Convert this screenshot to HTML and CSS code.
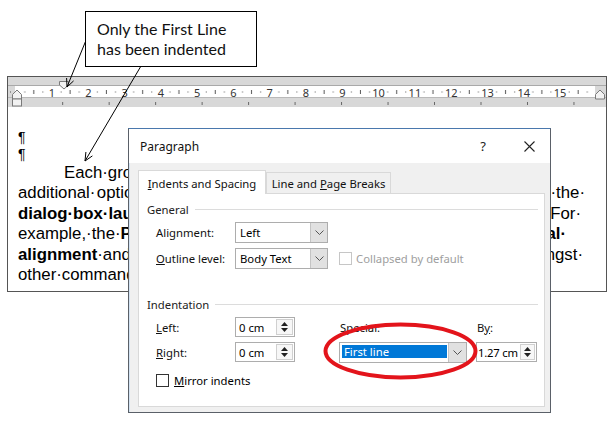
FILE: index.html
```html
<!DOCTYPE html>
<html>
<head>
<meta charset="utf-8">
<link rel="stylesheet" href="styles.css">
</head>
<body>
<div class="callout">Only the First Line<br>has been indented</div>

<div class="word">
  <svg class="ruler" viewBox="8 77 598 30" width="598" height="30">
    <defs>
      <pattern id="rq" patternUnits="userSpaceOnUse" x="15.7" y="77" width="36.29" height="30">
        <rect x="8.6" y="14.5" width="1" height="1" fill="#555"/>
        <rect x="17.6" y="13" width="1" height="4" fill="#555"/>
        <rect x="26.7" y="14.5" width="1" height="1" fill="#555"/>
      </pattern>
      <pattern id="rt" patternUnits="userSpaceOnUse" x="15.7" y="77" width="46.48" height="30">
        <rect x="0" y="25" width="1" height="3" fill="#666"/>
      </pattern>
    </defs>
    <rect x="8" y="77" width="598" height="30" fill="#d8d8d8"/>
    <rect x="15" y="85" width="580" height="13" fill="#fff"/>
    <line x1="8" y1="85.5" x2="606" y2="85.5" stroke="#a9a9a9"/>
    <line x1="8" y1="97.5" x2="606" y2="97.5" stroke="#b9b9b9"/>
    <rect x="10" y="91.5" width="1" height="1" fill="#555"/>
    <rect x="15.7" y="77" width="579" height="30" fill="url(#rq)"/>
    <rect x="55" y="77" width="540" height="30" fill="url(#rt)"/>
    <g class="rnum">
      <text x="52" y="96.5">1</text>
      <text x="88.3" y="96.5">2</text>
      <text x="124.6" y="96.5">3</text>
      <text x="160.9" y="96.5">4</text>
      <text x="197.2" y="96.5">5</text>
      <text x="233.4" y="96.5">6</text>
      <text x="269.7" y="96.5">7</text>
      <text x="306" y="96.5">8</text>
      <text x="342.3" y="96.5">9</text>
      <text x="378.6" y="96.5">10</text>
      <text x="414.9" y="96.5">11</text>
      <text x="451.2" y="96.5">12</text>
      <text x="487.5" y="96.5">13</text>
      <text x="523.8" y="96.5">14</text>
      <text x="560.1" y="96.5">15</text>
    </g>
    <path d="M59.5 81.5 H68.5 V85 L64 89 L59.5 85 Z" fill="#f2f2f2" stroke="#7a7a7a"/>
    <path d="M12.5 99 V94.5 L17 90 L21.5 94.5 V99 Z" fill="#f2f2f2" stroke="#7a7a7a"/>
    <rect x="12.5" y="99" width="9" height="7" fill="#f2f2f2" stroke="#7a7a7a"/>
    <path d="M595.5 99 V94.5 L600 90 L604.5 94.5 V99 Z" fill="#f2f2f2" stroke="#7a7a7a"/>
  </svg>
  <div class="doc">
    <div class="pil">¶</div>
    <div class="pil last">¶</div>
    <div class="line first"><span>Each·gro</span></div>
    <div class="line"><span>additional·&#8202;optio</span><span>·the·</span></div>
    <div class="line"><span><b>dialog·box·laun</b></span><span class="e3">For·</span></div>
    <div class="line"><span>example,·the·<b>Pa</b></span><span class="e19"><b>Vertical·</b></span></div>
    <div class="line"><span><b>alignment</b>·and</span><span class="e2">amongst·</span></div>
    <div class="line"><span>other·command</span></div>
  </div>
</div>

<div class="dialog">
  <div class="titlebar">
    <span class="title">Paragraph</span>
    <span class="help">?</span>
    <svg class="close" width="11" height="11" viewBox="0 0 11 11"><path d="M0.5 0.5 L10.5 10.5 M10.5 0.5 L0.5 10.5" stroke="#222" stroke-width="1.1" fill="none"/></svg>
  </div>
  <div class="dbody">
    <div class="tabs">
      <div class="tab active"><span><u>I</u>ndents and Spacing</span></div>
      <div class="tab"><span>Line and <u>P</u>age Breaks</span></div>
    </div>
    <div class="panel">
      <div class="legend"><span>General</span></div>
      <div class="grid general">
        <span class="lbl">Ali<u>g</u>nment:</span>
        <div class="select"><span class="val">Left</span><span class="dd"><svg width="9" height="5" viewBox="0 0 9 5"><path d="M0.5 0.5 L4.5 4.5 L8.5 0.5" stroke="#555" fill="none"/></svg></span></div>
        <span></span>
        <span></span>
        <span class="lbl"><u>O</u>utline level:</span>
        <div class="select"><span class="val">Body Text</span><span class="dd"><svg width="9" height="5" viewBox="0 0 9 5"><path d="M0.5 0.5 L4.5 4.5 L8.5 0.5" stroke="#555" fill="none"/></svg></span></div>
        <span></span>
        <div class="chk disabled"><span class="box"></span><span>Collapsed by default</span></div>
      </div>
      <div class="legend sec2"><span>Indentation</span></div>
      <div class="grid indent">
        <span class="lbl"><u>L</u>eft:</span>
        <div class="spin"><span class="val">0 cm</span><span class="arrows"><svg width="7" height="4" viewBox="0 0 7 4"><path d="M0 4 L3.5 0 L7 4 Z" fill="#222"/></svg><svg width="7" height="4" viewBox="0 0 7 4"><path d="M0 0 L3.5 4 L7 0 Z" fill="#222"/></svg></span></div>
        <span></span>
        <span class="lbl special"><u>S</u>pecial:</span>
        <span></span>
        <span class="lbl by">B<u>y</u>:</span>
        <span class="lbl"><u>R</u>ight:</span>
        <div class="spin"><span class="val">0 cm</span><span class="arrows"><svg width="7" height="4" viewBox="0 0 7 4"><path d="M0 4 L3.5 0 L7 4 Z" fill="#222"/></svg><svg width="7" height="4" viewBox="0 0 7 4"><path d="M0 0 L3.5 4 L7 0 Z" fill="#222"/></svg></span></div>
        <span></span>
        <div class="select sel-special"><span class="hl">First line</span><span class="dd"><svg width="9" height="5" viewBox="0 0 9 5"><path d="M0.5 0.5 L4.5 4.5 L8.5 0.5" stroke="#555" fill="none"/></svg></span></div>
        <span></span>
        <div class="spin by-spin"><span class="val">1.27 cm</span><span class="arrows"><svg width="7" height="4" viewBox="0 0 7 4"><path d="M0 4 L3.5 0 L7 4 Z" fill="#222"/></svg><svg width="7" height="4" viewBox="0 0 7 4"><path d="M0 0 L3.5 4 L7 0 Z" fill="#222"/></svg></span></div>
      </div>
      <div class="chk mirror"><span class="box"></span><span><u>M</u>irror indents</span></div>
    </div>
  </div>
</div>

<svg class="overlay" width="616" height="426" viewBox="0 0 616 426">
  <path d="M85.5 41.5 L67 87 M73.6 80.9 L67 87 L66.6 78" stroke="#000" stroke-width="1" fill="none"/>
  <path d="M141 66 L85 161 M92.4 155.9 L85 161 L85.9 152" stroke="#000" stroke-width="1" fill="none"/>
  <ellipse cx="400.5" cy="351" rx="75" ry="26.5" fill="none" stroke="#e3141b" stroke-width="4"/>
</svg>
</body>
</html>
```

FILE: styles.css
```css
* { box-sizing: border-box; }
html, body { margin: 0; padding: 0; }
body {
  width: 616px;
  height: 426px;
  overflow: hidden;
  position: relative;
  background: #fff;
  font-family: "Liberation Sans", Arial, sans-serif;
}

.callout {
  margin: 11px 0 0 85px;
  width: 172px;
  height: 56px;
  border: 1px solid #000;
  padding: 7px 0 0 11px;
  font-family: Lato, "Open Sans", sans-serif;
  font-size: 16px;
  line-height: 19.5px;
  color: #111;
}

.word {
  margin: 9px 0 0 7px;
  width: 600px;
  height: 216px;
  border: 1px solid #555;
  display: flex;
  flex-direction: column;
  background: #fff;
}
.ruler { display: block; flex: none; }
.rnum text {
  font-family: "Noto Sans", sans-serif;
  font-size: 11px;
  fill: #333;
  text-anchor: middle;
}

.doc {
  flex: 1;
  overflow: hidden;
  padding: 22px 21px 0 10px;
  color: #000;
}
.pil {
  font-size: 14px;
  line-height: 17.3px;
}
.pil.last { margin-bottom: -1px; }
.line {
  display: flex;
  justify-content: space-between;
  font-size: 16.8px;
  line-height: 20.5px;
  white-space: nowrap;
}
.line.first { padding-left: 46px; }
.e2 { margin-right: 2px; }
.e3 { margin-right: 4px; }
.e19 { margin-right: 19px; }

.dialog {
  position: absolute;
  left: 128px;
  top: 128px;
  width: 423px;
  height: 285px;
  border: 1px solid #5a6068;
  border-top-color: #4a78ad;
  background: #f0f0f0;
  box-shadow: inset 1px 1px 0 #d3e3f3;
  font-family: "Noto Sans", sans-serif;
  font-size: 11.3px;
  color: #000;
  display: flex;
  flex-direction: column;
}
.titlebar {
  height: 34px;
  flex: none;
  background: #fff;
  display: flex;
  align-items: center;
  padding: 0 15px 0 11px;
}
.title { flex: 1; font-size: 12px; color: #111; }
.help { font-size: 13px; color: #222; margin-right: 38px; }
.close { display: block; }

.dbody {
  flex: 1;
  padding: 7px 5px 0 9px;
  display: flex;
  flex-direction: column;
}
.tabs {
  display: flex;
  align-items: flex-end;
  height: 24px;
  margin-bottom: -1px;
  position: relative;
  z-index: 1;
}
.tab {
  width: 125px;
  height: 22px;
  border: 1px solid #d9d9d9;
  background: #f0f0f0;
  display: flex;
  align-items: center;
  justify-content: center;
  color: #111;
  white-space: nowrap;
}
.tab.active {
  width: 128px;
  height: 24px;
  background: #fff;
  border-bottom: none;
  padding-top: 1px;
}
.panel {
  height: 214px;
  flex: none;
  background: #fff;
  border: 1px solid #d9d9d9;
  padding: 8px 6px 0 8px;
}
.legend {
  display: flex;
  align-items: center;
  height: 14px;
  color: #222;
}
.legend::after {
  content: "";
  flex: 1;
  height: 1px;
  background: #dcdcdc;
  margin-left: 6px;
}
.legend.sec2 { margin-top: 28px; }

.grid {
  display: grid;
  margin: 6px 0 0 9px;
  row-gap: 5px;
  align-items: center;
}
.general {
  grid-template-columns: 79px 93px 11px auto;
  grid-template-rows: 21px 21px;
}
.indent {
  grid-template-columns: 79px 60px 44px 128px 9px 61px;
  grid-template-rows: 20px 21px;
}
.lbl { color: #111; white-space: nowrap; }
.lbl.special { padding-left: 1px; }
.lbl.by { padding-left: 1px; }

.select {
  display: flex;
  height: 21px;
  border: 1px solid #adadad;
  background: #fff;
}
.select .val {
  flex: 1;
  padding-left: 4px;
  display: flex;
  align-items: center;
  white-space: nowrap;
}
.select .dd {
  width: 17px;
  flex: none;
  background: #e1e1e1;
  border-left: 1px solid #c4c4c4;
  display: flex;
  align-items: center;
  justify-content: center;
}
.sel-special { padding: 2px 0 0 2px; }
.sel-special .hl {
  flex: 1;
  height: 13px;
  margin-right: 1px;
  background: #0078d7;
  color: #fff;
  display: flex;
  align-items: center;
  padding-left: 2px;
  white-space: nowrap;
}
.sel-special .dd { margin-top: -2px; width: 18px; }

.spin {
  display: flex;
  height: 20px;
  align-self: start;
  border: 1px solid #adadad;
  background: #fff;
}
.spin .val {
  flex: 1;
  min-width: 0;
  padding-left: 3px;
  display: flex;
  align-items: center;
  white-space: nowrap;
}
.spin .arrows {
  width: 17px;
  flex: none;
  margin: 1px 1px 1px 0;
  border: 1px solid #d0d0d0;
  background: #f7f7f7;
  display: flex;
  flex-direction: column;
  align-items: center;
  justify-content: space-evenly;
}
.spin .arrows svg { display: block; }
.by-spin .val { padding-left: 1px; letter-spacing: -0.2px; }
.by-spin .arrows { width: 15px; }

.chk {
  display: flex;
  align-items: center;
  white-space: nowrap;
}
.chk .box {
  width: 13px;
  height: 13px;
  border: 1px solid #333;
  background: #fff;
  margin-right: 5px;
  flex: none;
}
.chk.disabled { color: #a0a0a0; }
.chk.disabled .box { border-color: #c6c6c6; margin-right: 4px; }
.chk.mirror { margin: 10px 0 0 9px; height: 14px; }

.overlay {
  position: absolute;
  left: 0;
  top: 0;
  pointer-events: none;
}
```
